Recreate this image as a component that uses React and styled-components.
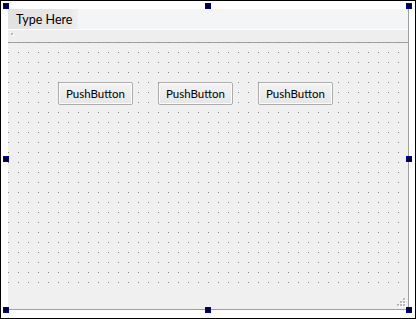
import React from "react";
import styled, { createGlobalStyle } from "styled-components";

const Global = createGlobalStyle`
  html, body { margin: 0; padding: 0; background: #fff; }
  body { font-family: "Lato", "Liberation Sans", sans-serif; }
`;

const Frame = styled.div`
  position: relative;
  box-sizing: border-box;
  width: 416px;
  height: 319px;
  border: 1px solid #000;
  background: #fff;
  padding: 8px 6px 0 7px;
`;

const Form = styled.div`
  box-sizing: border-box;
  width: 401px;
  height: 301px;
  display: flex;
  flex-direction: column;
  background: #f0f0f0;
  border-right: 1px solid #a0a0a0;
  border-bottom: 1px solid #a0a0a0;
`;

const MenuBar = styled.div`
  height: 20px;
  display: flex;
  align-items: stretch;
  background: #f4f5f7;
  border-bottom: 1px solid #ffffff;
`;

const MenuItem = styled.div`
  width: 70px;
  display: flex;
  align-items: center;
  padding-left: 8px;
  box-sizing: border-box;
  font-size: 12.5px;
  color: #000;
  background: linear-gradient(to right, #e2e2e2 0%, #e8e8e8 85%, #f0f0f0 100%);
`;

const ToolStrip = styled.div`
  height: 12px;
  background: #eeeeee;
  display: flex;
  align-items: flex-start;
  padding: 3px 0 0 3px;
  box-sizing: border-box;
`;

const Grip = styled.span`
  width: 2px;
  height: 2px;
  background: #b8b8b8;
  box-shadow: 1px 1px 0 #fff;
`;

const Canvas = styled.div`
  height: 247px;
  display: flex;
  align-items: flex-start;
  gap: 25px;
  padding: 40px 0 0 50px;
  box-sizing: border-box;
  background-color: #f0f0f0;
  background-image:
    conic-gradient(from 270deg at 1px 1px, #8a8a8a 25%, transparent 0),
    linear-gradient(#a0a0a0, #a0a0a0);
  background-size: 10px 10px, 100% 1px;
  background-repeat: repeat, no-repeat;
  background-position: 0 0, 0 0;
`;

const PushButton = styled.button`
  width: 75px;
  height: 23px;
  padding: 0;
  margin: 0;
  box-sizing: border-box;
  border: 1px solid #adadad;
  border-radius: 2px;
  background: linear-gradient(#f3f3f3, #e6e6e6);
  box-shadow: inset 0 0 0 1px #fbfbfb;
  font-family: "Lato", "Liberation Sans", sans-serif;
  font-size: 11.5px;
  color: #000;
  display: flex;
  align-items: center;
  justify-content: center;
`;

const StatusBar = styled.div`
  flex: 1;
  display: flex;
  justify-content: flex-end;
  align-items: flex-end;
  padding: 0 2px 2px 0;
`;

const Handle = styled.div`
  position: absolute;
  width: 6px;
  height: 6px;
  box-sizing: border-box;
  background: #000030;
  border: 1px solid #000090;
`;

const handles = [
  [2, 2], [204, 2], [405, 2],
  [2, 155], [405, 155],
  [2, 306], [204, 306], [405, 306],
];

function SizeGrip() {
  const dots = [[6, 0], [3, 3], [6, 3], [0, 6], [3, 6], [6, 6]];
  return (
    <svg width="9" height="9" viewBox="0 0 9 9">
      {dots.map(([x, y], i) => (
        <g key={i}>
          <rect x={x + 1} y={y + 1} width="2" height="2" fill="#ffffff" />
          <rect x={x} y={y} width="2" height="2" fill="#b9b9b9" />
        </g>
      ))}
    </svg>
  );
}

export default function App() {
  return (
    <>
      <Global />
      <Frame>
        <Form>
          <MenuBar>
            <MenuItem>Type Here</MenuItem>
          </MenuBar>
          <ToolStrip>
            <Grip />
          </ToolStrip>
          <Canvas>
            <PushButton>PushButton</PushButton>
            <PushButton>PushButton</PushButton>
            <PushButton>PushButton</PushButton>
          </Canvas>
          <StatusBar>
            <SizeGrip />
          </StatusBar>
        </Form>
        {handles.map(([x, y], i) => (
          <Handle key={i} style={{ left: x, top: y }} />
        ))}
      </Frame>
    </>
  );
}
